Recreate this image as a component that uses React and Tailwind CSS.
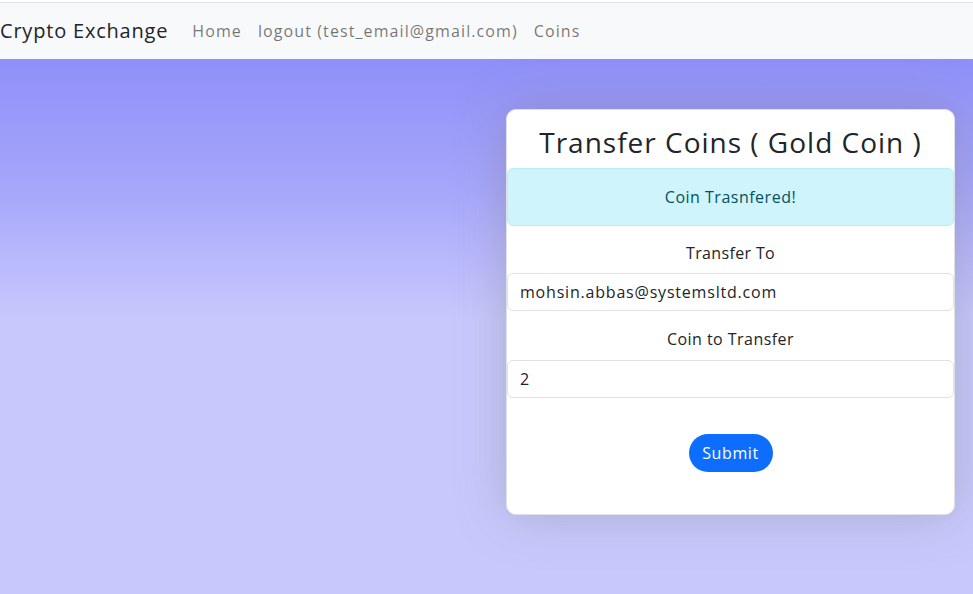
import React from 'react';

export default function App() {
    return (
        <div className="min-h-screen flex flex-col font-['Open_Sans',sans-serif] text-[#212529]">
            {/* top rule + navbar */}
            <div className="h-[2px] bg-white" />
            <nav className="h-[57px] flex items-center bg-[#f8f9fa] border-t border-[#dee2e6]">
                <span className="text-[20px] text-[#212529] mr-4 tracking-[0.8px]">Crypto Exchange</span>
                <a className="px-2 text-[16px] text-black/55 tracking-[1.1px]">Home</a>
                <a className="px-2 text-[16px] text-black/55 tracking-[1.1px]">logout (test_email@gmail.com)</a>
                <a className="px-2 text-[16px] text-black/55 tracking-[1.1px]">Coins</a>
            </nav>

            {/* main */}
            <main className="flex-1 flex justify-end pr-[18px] pt-[50px] bg-[linear-gradient(180deg,#8f8ff9_0px,#a6a6fb_130px,#c8c8fd_260px,#c8c8fd_100%)]">
                <div className="w-[449px] h-[406px] bg-white rounded-[10px] border border-[#dee2e6] shadow-[0_0_50px_rgba(120,120,120,0.35)] flex flex-col items-center">
                    <h2 className="mt-[14px] text-[28px] leading-[36px] tracking-[1px] text-[#212529]">Transfer Coins ( Gold Coin )</h2>
                    <div className="mt-[8px] w-full h-[58px] flex items-center justify-center bg-[#cff4fc] border border-[#b6effb] rounded-[6px] text-[#055160] text-[16px] tracking-[0.5px]">
                        Coin Trasnfered!
                    </div>
                    <label className="mt-[15px] text-[16px] leading-[24px] tracking-[0.35px]">Transfer To</label>
                    <div className="mt-[8px] w-full h-[38px] flex items-center px-3 border border-[#dee2e6] rounded-[6px] text-[16px] tracking-[0.8px]">
                        mohsin.abbas@systemsltd.com
                    </div>
                    <label className="mt-[16px] text-[16px] leading-[24px] tracking-[0.45px]">Coin to Transfer</label>
                    <div className="mt-[9px] w-full h-[38px] flex items-center px-3 border border-[#dee2e6] rounded-[6px] text-[16px]">
                        2
                    </div>
                    <button className="mt-[36px] h-[38px] w-[84px] rounded-[19px] bg-[#0d6efd] text-white text-[16px] tracking-[0.6px]">
                        Submit
                    </button>
                </div>
            </main>
        </div>
    );
}
